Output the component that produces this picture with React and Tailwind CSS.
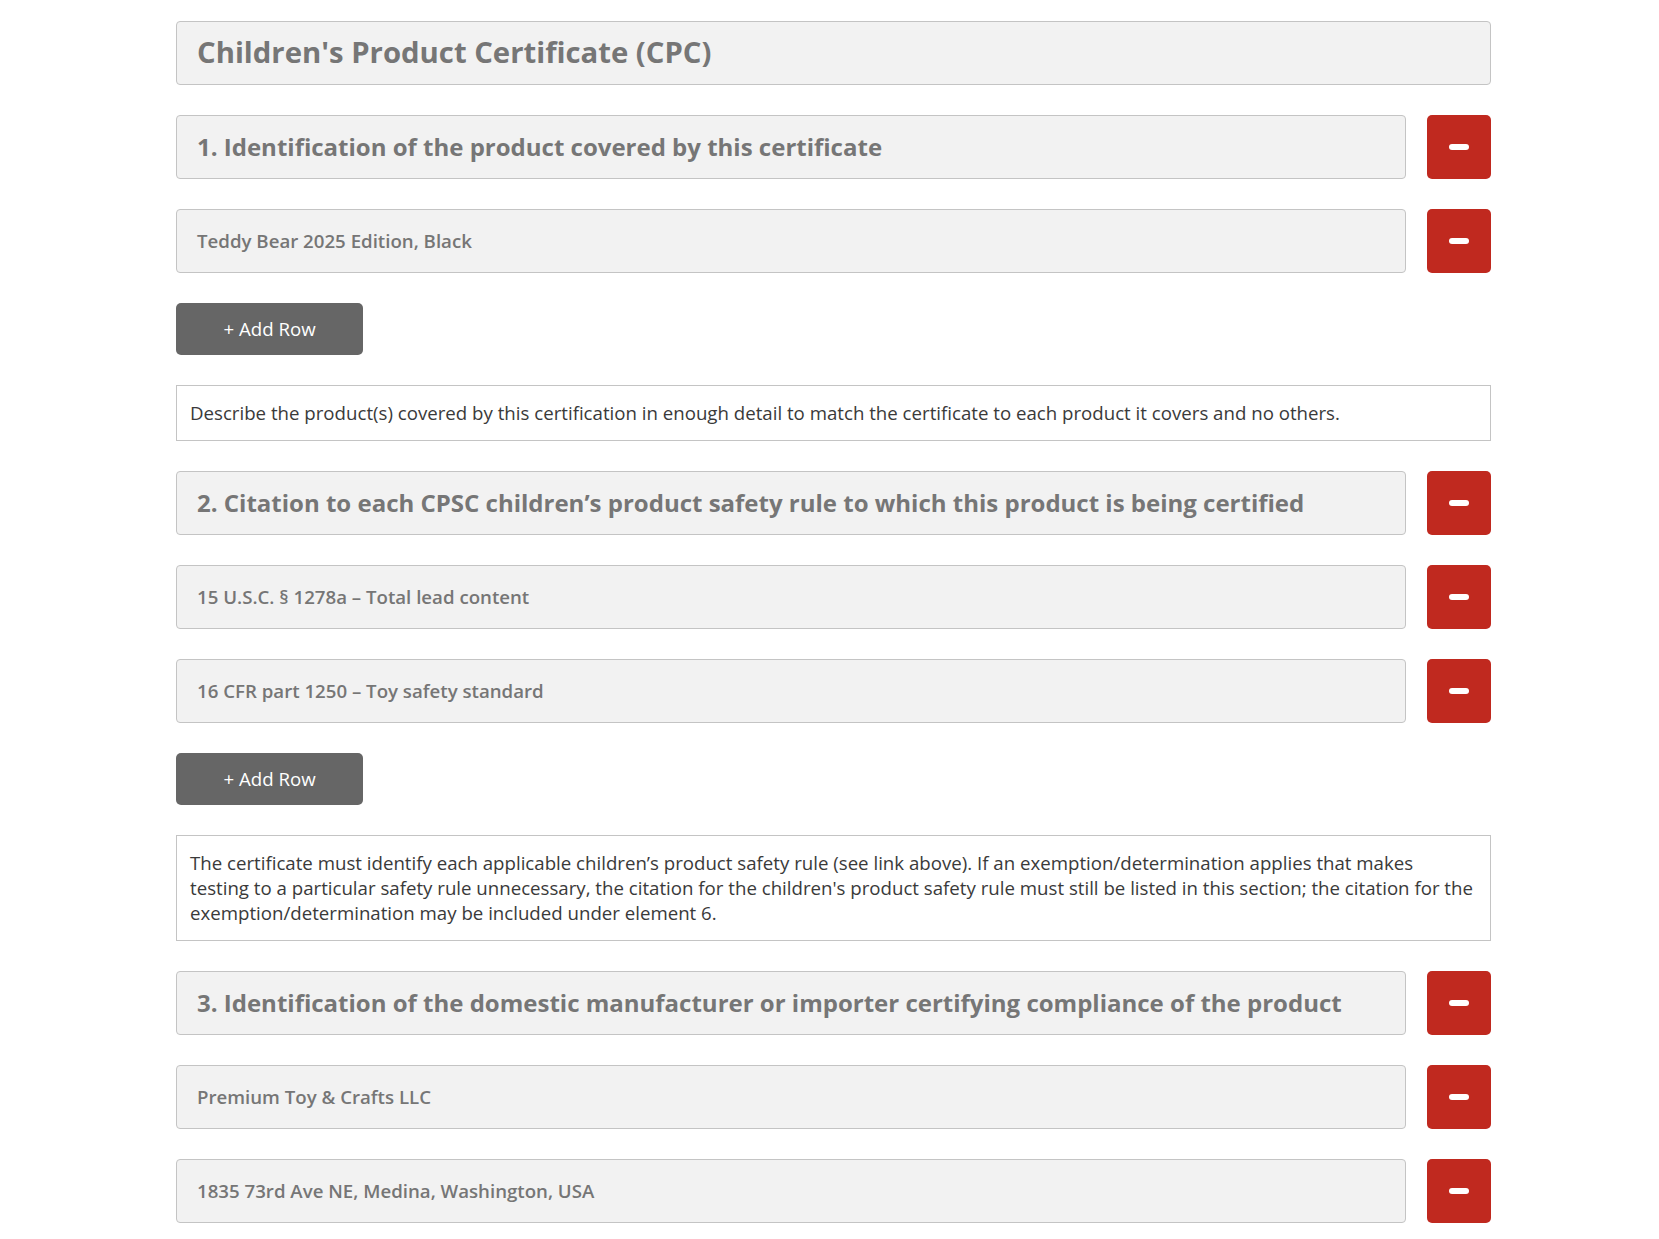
import React from "react";

function Minus() {
  return <span className="block w-[20px] h-[6px] rounded-[3px] bg-white" />;
}

function RemoveBtn() {
  return (
    <button className="w-[64px] h-[64px] shrink-0 rounded-[5px] bg-[#c0291f] flex items-center justify-center">
      <Minus />
    </button>
  );
}

function Heading({ children }) {
  return (
    <div className="flex gap-[21px]">
      <div className="flex-1 h-[64px] rounded-[4px] border border-[#c4c4c4] bg-[#f2f2f2] flex items-center pl-[20px] text-[24px] font-bold text-[#767676]">
        {children}
      </div>
      <RemoveBtn />
    </div>
  );
}

function Row({ children }) {
  return (
    <div className="flex gap-[21px]">
      <div className="flex-1 h-[64px] rounded-[4px] border border-[#c4c4c4] bg-[#f2f2f2] flex items-center pl-[20px] text-[18.67px] font-semibold text-[#767676]">
        {children}
      </div>
      <RemoveBtn />
    </div>
  );
}

function AddRow() {
  return (
    <div>
      <button className="w-[187px] h-[52px] rounded-[5px] bg-[#666666] text-white text-[18.67px]">
        + Add Row
      </button>
    </div>
  );
}

function Desc({ children }) {
  return (
    <div className="border border-[#c4c4c4] bg-white pl-[13px] pr-[15px] pt-[14px] pb-[15px] text-[18.67px] leading-[25px] text-[#3a3a3a]">
      {children}
    </div>
  );
}

export default function App() {
  return (
    <div
      className="min-h-screen bg-white pt-[21px] pb-[40px]"
      style={{ fontFamily: '"Open Sans", "Noto Sans", sans-serif' }}
    >
      <div className="ml-[176px] w-[1315px] flex flex-col gap-[30px]">
        <div className="h-[64px] rounded-[4px] border border-[#c4c4c4] bg-[#f2f2f2] flex items-center pl-[20px] text-[29.3px] font-bold text-[#767676]">
          Children's Product Certificate (CPC)
        </div>

        <Heading>1. Identification of the product covered by this certificate</Heading>
        <Row>Teddy Bear 2025 Edition, Black</Row>
        <AddRow />
        <Desc>
          Describe the product(s) covered by this certification in enough detail to match the certificate to each product it covers and no others.
        </Desc>

        <Heading>2. Citation to each CPSC children’s product safety rule to which this product is being certified</Heading>
        <Row>15 U.S.C. § 1278a – Total lead content</Row>
        <Row>16 CFR part 1250 – Toy safety standard</Row>
        <AddRow />
        <Desc>
          The certificate must identify each applicable children’s product safety rule (see link above). If an exemption/determination applies that makes testing to a particular safety rule unnecessary, the citation for the children's product safety rule must still be listed in this section; the citation for the exemption/determination may be included under element 6.
        </Desc>

        <Heading>3. Identification of the domestic manufacturer or importer certifying compliance of the product</Heading>
        <Row>Premium Toy &amp; Crafts LLC</Row>
        <Row>1835 73rd Ave NE, Medina, Washington, USA</Row>
      </div>
    </div>
  );
}
